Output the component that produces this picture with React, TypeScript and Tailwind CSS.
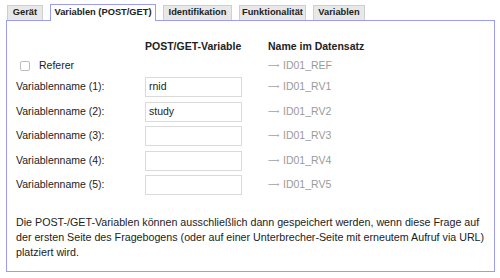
import React from 'react'

const tabs = [
  { label: 'Gerät', width: 'w-[36px]' },
  { label: 'Variablen (POST/GET)', width: 'w-[106px]', active: true },
  { label: 'Identifikation', width: 'w-[69px]' },
  { label: 'Funktionalität', width: 'w-[67px]' },
  { label: 'Variablen', width: 'w-[52px]' },
]

const rows = [
  { label: 'Variablenname (1):', value: 'rnid', id: 'ID01_RV1' },
  { label: 'Variablenname (2):', value: 'study', id: 'ID01_RV2' },
  { label: 'Variablenname (3):', value: '', id: 'ID01_RV3' },
  { label: 'Variablenname (4):', value: '', id: 'ID01_RV4' },
  { label: 'Variablenname (5):', value: '', id: 'ID01_RV5' },
]

function VarName({ id }: { id: string }) {
  return (
    <div className="flex items-center text-[10.5px] text-[#9a9a9a]">
      <span className="mr-[4px] text-[8px] text-[#b0b0b0]">⟶</span>
      {id}
    </div>
  )
}

export default function App() {
  return (
    <div
      className="h-[278px] w-[500px] bg-white text-[#222]"
      style={{ fontFamily: '"Liberation Sans", Arial, sans-serif' }}
    >
      <div className="flex items-end gap-[7px] pl-[7px] pt-[4px]">
        {tabs.map((t) =>
          t.active ? (
            <div
              key={t.label}
              className={`relative z-10 -mb-px flex h-[17px] items-center justify-center whitespace-nowrap border border-b-0 border-[#9c9cf0] bg-white text-[9.3px] font-bold ${t.width}`}
            >
              {t.label}
            </div>
          ) : (
            <div
              key={t.label}
              className={`flex h-[15px] items-center justify-center whitespace-nowrap border border-b-0 border-[#cfcfcf] bg-[#e8e8e8] text-[9.3px] font-bold ${t.width}`}
            >
              {t.label}
            </div>
          ),
        )}
      </div>

      <div className="ml-[6px] h-[252px] w-[489px] border border-[#9c9cf0] pl-[9px] pr-[10px] pt-[19px]">
        <div className="flex h-[14px] items-center text-[10.5px] font-bold">
          <div className="w-[129px]" />
          <div className="w-[123px]">POST/GET-Variable</div>
          <div>Name im Datensatz</div>
        </div>

        <div className="mt-[4px] flex h-[16px] items-center">
          <div className="flex w-[252px] items-center">
            <span className="ml-[4px] mr-[9px] inline-block h-[10px] w-[10px] rounded-[2px] border border-[#bdbdbd] bg-white" />
            <span className="text-[10.5px]">Referer</span>
          </div>
          <VarName id="ID01_REF" />
        </div>

        <div className="mt-[1px] flex flex-col">
          {rows.map((r) => (
            <div key={r.label} className="flex h-[24.5px] items-center">
              <div className="w-[129px] text-[10.5px]">{r.label}</div>
              <div className="w-[123px]">
                <div className="flex h-[20px] w-[97px] items-center border border-[#dadada] px-[3px] text-[10.5px]">
                  {r.value}
                </div>
              </div>
              <VarName id={r.id} />
            </div>
          ))}
        </div>

        <p className="mt-[17px] whitespace-nowrap text-[10.7px] leading-[15px]">
          Die POST-/GET-Variablen können ausschließlich dann gespeichert werden, wenn diese Frage auf
          <br />
          der ersten Seite des Fragebogens (oder auf einer Unterbrecher-Seite mit erneutem Aufruf via URL)
          <br />
          platziert wird.
        </p>
      </div>
    </div>
  )
}
